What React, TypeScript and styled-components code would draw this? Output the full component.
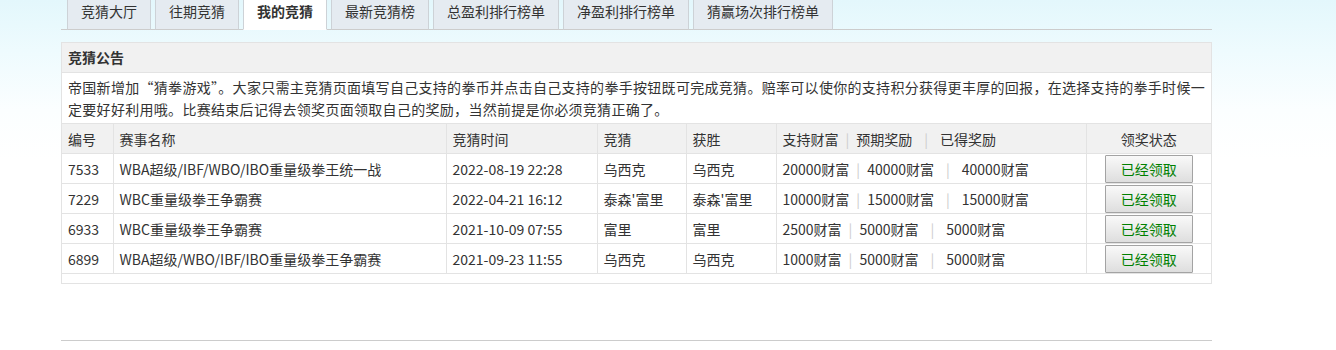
import * as React from "react";
import styled, { createGlobalStyle } from "styled-components";

const GlobalStyle = createGlobalStyle`
  html, body {
    margin: 0;
    padding: 0;
  }
  body {
    font-family: "Noto Sans CJK SC", "Liberation Sans", sans-serif;
    font-size: 14px;
    color: #333;
    background: linear-gradient(to bottom, #e3f7fc 0px, #eefbfe 50px, #fbfeff 110px, #ffffff 160px);
    min-height: 350px;
  }
`;

const tabs = [
  "竞猜大厅",
  "往期竞猜",
  "我的竞猜",
  "最新竞猜榜",
  "总盈利排行榜单",
  "净盈利排行榜单",
  "猜赢场次排行榜单",
];

const rows = [
  {
    id: "7533",
    name: "WBA超级/IBF/WBO/IBO重量级拳王统一战",
    time: "2022-08-19 22:28",
    guess: "乌西克",
    winner: "乌西克",
    stake: "20000",
    expect: "40000",
    got: "40000",
  },
  {
    id: "7229",
    name: "WBC重量级拳王争霸赛",
    time: "2022-04-21 16:12",
    guess: "泰森'富里",
    winner: "泰森'富里",
    stake: "10000",
    expect: "15000",
    got: "15000",
  },
  {
    id: "6933",
    name: "WBC重量级拳王争霸赛",
    time: "2021-10-09 07:55",
    guess: "富里",
    winner: "富里",
    stake: "2500",
    expect: "5000",
    got: "5000",
  },
  {
    id: "6899",
    name: "WBA超级/WBO/IBF/IBO重量级拳王争霸赛",
    time: "2021-09-23 11:55",
    guess: "乌西克",
    winner: "乌西克",
    stake: "1000",
    expect: "5000",
    got: "5000",
  },
];

const cols = [51, 333, 151, 89, 90, 310, 125];

const App = () => {
  const active = 2;

  return (
    <>
      <GlobalStyle />
      <Page>
        <TabBar>
          {tabs.map((t, i) => (
            <Tab key={t} $active={i === active}>
              {t}
            </Tab>
          ))}
        </TabBar>

        <Box>
          <BoxTitle>竞猜公告</BoxTitle>
          <Notice>
            帝国新增加“猜拳游戏”。大家只需主竞猜页面填写自己支持的拳币并点击自己支持的拳手按钮既可完成竞猜。赔率可以使你的支持积分获得更丰厚的回报，在选择支持的拳手时候一定要好好利用哦。比赛结束后记得去领奖页面领取自己的奖励，当然前提是你必须竞猜正确了。
          </Notice>
          <Table>
            <colgroup>
              {cols.map((w, i) => (
                <col key={i} style={{ width: w }} />
              ))}
            </colgroup>
            <thead>
              <tr>
                <Th>编号</Th>
                <Th>赛事名称</Th>
                <Th>竞猜时间</Th>
                <Th>竞猜</Th>
                <Th>获胜</Th>
                <Th>
                  支持财富<Sep>|</Sep>预期奖励<Sep $wide>|</Sep>已得奖励
                </Th>
                <Th $center>领奖状态</Th>
              </tr>
            </thead>
            <tbody>
              {rows.map((r) => (
                <tr key={r.id}>
                  <Td>{r.id}</Td>
                  <Td>{r.name}</Td>
                  <Td>{r.time}</Td>
                  <Td>{r.guess}</Td>
                  <Td>{r.winner}</Td>
                  <Td>
                    {r.stake}财富<Sep>|</Sep>
                    {r.expect}财富<Sep $wide>|</Sep>
                    {r.got}财富
                  </Td>
                  <Td $center>
                    <ClaimButton type="button">已经领取</ClaimButton>
                  </Td>
                </tr>
              ))}
            </tbody>
          </Table>
        </Box>

        <Footer />
      </Page>
    </>
  );
};

export default App;

const Page = styled.div`
  width: 1151px;
  margin-left: 61px;
`;

const TabBar = styled.div`
  display: flex;
  gap: 4px;
  height: 29px;
  padding-left: 6px;
  border-bottom: 1px solid #cccccc;
`;

const Tab = styled.div<{ $active?: boolean }>`
  box-sizing: border-box;
  height: 30px;
  margin-bottom: -1px;
  padding: 0 13px 6px;
  line-height: 23px;
  white-space: nowrap;
  font-size: 14px;
  color: #333;
  font-weight: ${(p) => (p.$active ? "bold" : "normal")};
  background: ${(p) => (p.$active ? "#ffffff" : "#e5ebf1")};
  border: 1px solid #cdd2d7;
  border-top: 0;
  border-bottom-color: ${(p) => (p.$active ? "#ffffff" : "#cccccc")};
`;

const Box = styled.div`
  margin-top: 12px;
  border: 1px solid #e3e3e3;
  padding-bottom: 9px;
`;

const BoxTitle = styled.div`
  height: 29px;
  line-height: 29px;
  padding: 0 6px;
  font-weight: bold;
  font-size: 14px;
  background: #f1f1f1;
  border-bottom: 1px solid #e3e3e3;
`;

const Notice = styled.div`
  padding: 3px 6px 3px;
  line-height: 22px;
  letter-spacing: 0.3px;
  background: #ffffff;
`;

const Table = styled.table`
  width: 100%;
  table-layout: fixed;
  border-collapse: collapse;
  background: #ffffff;
  tr > *:first-child {
    border-left: 0;
  }
  tr > *:last-child {
    border-right: 0;
  }
`;

const Th = styled.th<{ $center?: boolean }>`
  height: 29px;
  padding: 0 6px;
  text-align: ${(p) => (p.$center ? "center" : "left")};
  font-weight: normal;
  color: #333;
  background: #f1f1f1;
  border: 1px solid #e3e3e3;
  white-space: nowrap;
`;

const Td = styled.td<{ $center?: boolean }>`
  height: 29px;
  padding: 0 6px;
  text-align: ${(p) => (p.$center ? "center" : "left")};
  color: #333;
  border: 1px solid #e3e3e3;
  white-space: nowrap;
`;

const Sep = styled.span<{ $wide?: boolean }>`
  color: #cccccc;
  margin: 0 ${(p) => (p.$wide ? "12px" : "7px")};
`;

const ClaimButton = styled.button`
  width: 88px;
  height: 28px;
  margin: 0;
  padding: 0;
  font-family: inherit;
  font-size: 14px;
  color: #008000;
  background: linear-gradient(to bottom, #f9f9f9, #dedede);
  border: 1px solid #a3a3a3;
  border-radius: 1px;
  vertical-align: middle;
`;

const Footer = styled.div`
  margin-top: 56px;
  border-top: 1px solid #cccccc;
`;
